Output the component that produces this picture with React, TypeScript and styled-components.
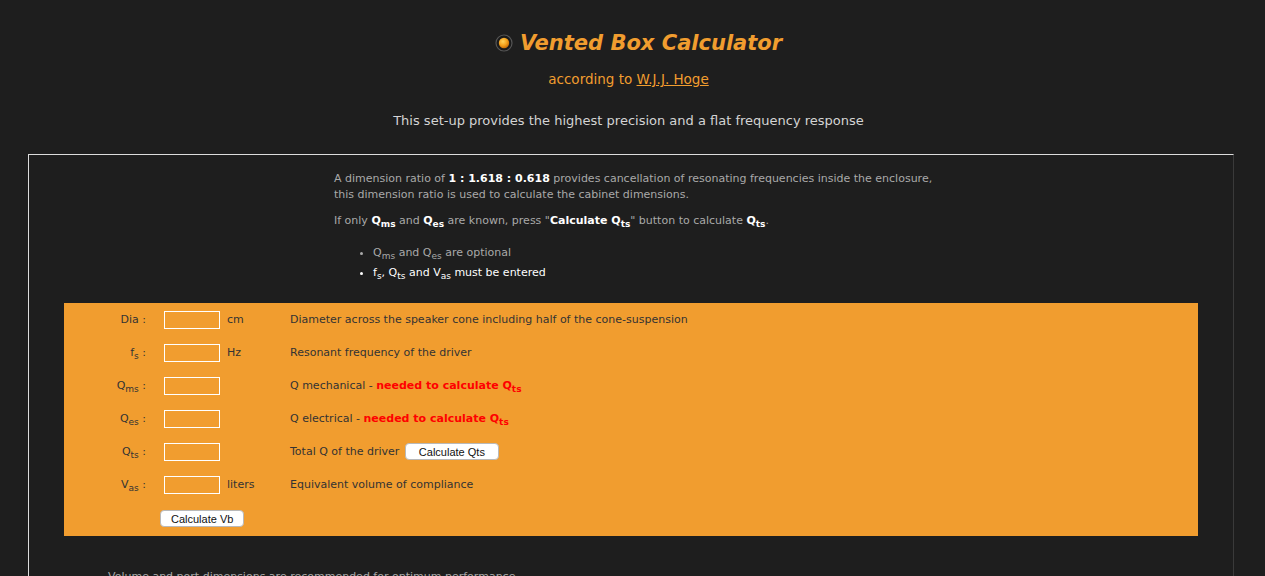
import type { ReactNode } from 'react';
import styled, { createGlobalStyle } from 'styled-components';

const GlobalStyle = createGlobalStyle`
  body {
    margin: 0;
    background: #1e1e1e;
    font-family: "DejaVu Sans", Verdana, sans-serif;
  }
`;

type Field = {
  label: string;
  sub?: string;
  unit?: string;
  desc: ReactNode;
};

// built inside a function: the styled parts below are not defined yet at module load
function getFields(): Field[] {
  return [
    { label: 'Dia', unit: 'cm', desc: 'Diameter across the speaker cone including half of the cone-suspension' },
    { label: 'f', sub: 's', unit: 'Hz', desc: 'Resonant frequency of the driver' },
    {
      label: 'Q',
      sub: 'ms',
      desc: (
        <>
          Q mechanical - <NeededText>needed to calculate Q<sub>ts</sub></NeededText>
        </>
      ),
    },
    {
      label: 'Q',
      sub: 'es',
      desc: (
        <>
          Q electrical - <NeededText>needed to calculate Q<sub>ts</sub></NeededText>
        </>
      ),
    },
    {
      label: 'Q',
      sub: 'ts',
      desc: (
        <>
          Total Q of the driver <Button type="button" $pad={13}>Calculate Qts</Button>
        </>
      ),
    },
    { label: 'V', sub: 'as', unit: 'liters', desc: 'Equivalent volume of compliance' },
  ];
}

function Dot() {
  return (
    <svg width="18" height="18" viewBox="0 0 18 18">
      <defs>
        <radialGradient id="dotFill" cx="40%" cy="35%" r="65%">
          <stop offset="0%" stopColor="#ffd35a" />
          <stop offset="60%" stopColor="#f4a11c" />
          <stop offset="100%" stopColor="#c86f08" />
        </radialGradient>
      </defs>
      <circle cx="9" cy="9" r="8" fill="#1a1a1a" stroke="#555" strokeWidth="1.2" />
      <circle cx="9" cy="9" r="5.2" fill="url(#dotFill)" />
    </svg>
  );
}

export default function App() {
  const fields = getFields();
  return (
    <>
      <GlobalStyle />
      <Header>
        <Title>
          <Dot />
          Vented Box Calculator
        </Title>
        <Subtitle>
          according to <a href="#hoge">W.J.J. Hoge</a>
        </Subtitle>
        <Tagline>This set-up provides the highest precision and a flat frequency response</Tagline>
      </Header>

      <Frame>
        <Intro>
          <p>
            A dimension ratio of <b>1 : 1.618 : 0.618</b> provides cancellation of resonating frequencies inside the enclosure,
            <br />
            this dimension ratio is used to calculate the cabinet dimensions.
          </p>
          <p>
            If only <Hi>Q<sub>ms</sub></Hi> and <Hi>Q<sub>es</sub></Hi> are known, press "<Hi>Calculate Q<sub>ts</sub></Hi>" button to calculate{' '}
            <b>Q<sub>ts</sub></b>.
          </p>
          <Notes>
            <Note>
              Q<sub>ms</sub> and Q<sub>es</sub> are optional
            </Note>
            <Note $strong>
              f<sub>s</sub>, Q<sub>ts</sub> and V<sub>as</sub> must be entered
            </Note>
          </Notes>
        </Intro>

        <Panel>
          {fields.map((f, i) => (
            <Row key={i}>
              <Label>
                {f.label}
                {f.sub && <sub>{f.sub}</sub>} :
              </Label>
              <Input type="text" />
              <Unit>{f.unit}</Unit>
              <Desc>{f.desc}</Desc>
            </Row>
          ))}
          <ButtonRow>
            <Button type="button">Calculate Vb</Button>
          </ButtonRow>
        </Panel>

        <Footnotes>
          <Note>Volume and port dimensions are recommended for optimum performance</Note>
        </Footnotes>
      </Frame>
    </>
  );
}

const Header = styled.header`
  display: flex;
  flex-direction: column;
  align-items: center;
  padding: 29px 8px 0 0;
`;

const Title = styled.h1`
  display: flex;
  align-items: center;
  gap: 7px;
  margin: 0;
  padding-left: 20px;
  height: 28px;
  font-size: 21px;
  font-weight: bold;
  font-style: italic;
  color: #f19d2f;
`;

const Subtitle = styled.div`
  margin-top: 14px;
  font-size: 13.5px;
  line-height: 16px;
  color: #f19d2f;

  a {
    color: #f19d2f;
  }
`;

const Tagline = styled.div`
  margin-top: 26px;
  font-size: 13px;
  line-height: 16px;
  color: #d4d4d4;
`;

const Frame = styled.main`
  box-sizing: border-box;
  margin: 25px 0 0 28px;
  width: 1206px;
  height: 440px;
  border-top: 1px solid #dcdcdc;
  border-left: 1px solid #dcdcdc;
  border-right: 1px solid #3a3a3a;
  padding: 16px 35px 0;
  overflow: hidden;
`;

const Intro = styled.section`
  margin-left: 270px;
  font-size: 11px;
  line-height: 16px;
  color: #a9a9a9;

  p {
    margin: 0 0 10px;
  }

  b {
    color: #fff;
  }

  sub {
    font-size: 9px;
    line-height: 0;
  }
`;

const Hi = styled.span`
  color: #fff;
  font-weight: 600;
`;

const Notes = styled.ul`
  margin: 14px 0 0;
  padding-left: 39px;
`;

const Note = styled.li<{ $strong?: boolean }>`
  line-height: 20px;
  color: ${(p) => (p.$strong ? '#fff' : '#a9a9a9')};

  sub {
    font-size: 9px;
    line-height: 0;
  }
`;

const Panel = styled.section`
  margin-top: 20px;
  background: #f19d2f;
  padding-bottom: 9px;
  font-size: 11px;
  color: #333;

  sub {
    font-size: 9px;
    line-height: 0;
  }
`;

const Row = styled.div`
  display: grid;
  grid-template-columns: 100px 63px 63px 1fr;
  align-items: center;
  height: 33px;
`;

const Label = styled.span`
  text-align: right;
  padding-right: 18px;
`;

const Input = styled.input`
  box-sizing: border-box;
  width: 56px;
  height: 18px;
  background: transparent;
  border: 1px solid #fff;
  padding: 0 3px;
  font-size: 11px;
  outline: none;
`;

const Unit = styled.span``;

const Desc = styled.span`
  white-space: nowrap;

  button {
    margin-left: 2px;
    vertical-align: middle;
  }
`;

const NeededText = styled.b`
  color: #ff0000;
`;

const Button = styled.button<{ $pad?: number }>`
  height: 17px;
  padding: 0 ${(p) => p.$pad ?? 10}px;
  background: #fff;
  border: 1px solid #b9b9b9;
  border-radius: 4px;
  font-family: "Liberation Sans", Arial, sans-serif;
  font-size: 11px;
  color: #111;
  cursor: pointer;
`;

const ButtonRow = styled.div`
  padding: 9px 0 0 96px;
`;

const Footnotes = styled.ul`
  margin: 31px 0 0;
  padding-left: 44px;
  font-size: 11px;
  color: #a9a9a9;
`;
